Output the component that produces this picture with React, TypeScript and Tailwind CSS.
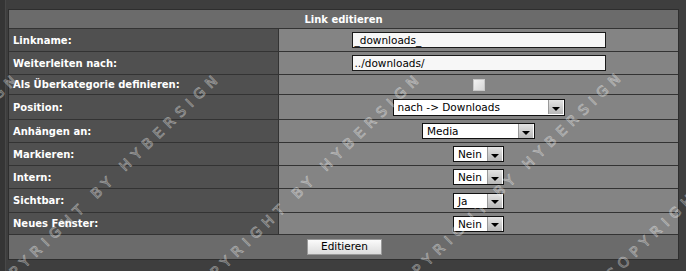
const font = "font-['Verdana','DejaVu_Sans',sans-serif]";

function TextBox({ value }: { value: string }) {
  return (
    <div className="w-[254px] h-[16px] shrink-0 bg-[#f7f7f7] border border-[#1a1a1a] px-[2px] text-[10.5px] leading-[14px] text-black">
      {value}
    </div>
  );
}

function Select({ value, width }: { value: string; width: string }) {
  return (
    <div className={`${width} shrink-0 bg-white border border-[#111] flex items-center text-[10.5px] text-black`}>
      <span className="flex-1 min-w-0 pl-[4px] leading-[14px] whitespace-nowrap overflow-hidden">{value}</span>
      <span className="w-[15px] h-[14px] shrink-0 mr-[1px] bg-gradient-to-b from-[#e4e4e4] to-[#b8b8b8] border-l border-[#999] flex items-center justify-center">
        <span className="block w-0 h-0 border-l-[4px] border-r-[4px] border-t-[4px] border-l-transparent border-r-transparent border-t-black mt-[3px]" />
      </span>
    </div>
  );
}

interface Row {
  label: string;
  h: string;
  field: React.ReactNode;
}

const rows: Row[] = [
  { label: "Linkname:", h: "h-[23px]", field: <TextBox value="_downloads_" /> },
  { label: "Weiterleiten nach:", h: "h-[23px]", field: <TextBox value="../downloads/" /> },
  {
    label: "Als Überkategorie definieren:",
    h: "h-[20px]",
    field: <div className="w-[12px] h-[12px] border border-[#c8c8c8] bg-gradient-to-br from-[#f2f2f2] to-[#d6d6d6]" />,
  },
  { label: "Position:", h: "h-[25px]", field: <Select value="nach -> Downloads" width="w-[172px] h-[17px]" /> },
  { label: "Anhängen an:", h: "h-[23px]", field: <Select value="Media" width="w-[113px] h-[16px]" /> },
  { label: "Markieren:", h: "h-[23px]", field: <Select value="Nein" width="w-[51px] h-[16px]" /> },
  { label: "Intern:", h: "h-[23px]", field: <Select value="Nein" width="w-[51px] h-[16px]" /> },
  { label: "Sichtbar:", h: "h-[24px]", field: <Select value="Ja" width="w-[51px] h-[16px]" /> },
  { label: "Neues Fenster:", h: "h-[22px]", field: <Select value="Nein" width="w-[51px] h-[16px]" /> },
];

const marks = [
  { left: "left-[-97px]", top: "top-[186px]" },
  { left: "left-[104px]", top: "top-[186px]" },
  { left: "left-[305px]", top: "top-[186px]" },
  { left: "left-[507px]", top: "top-[184px]" },
  { left: "left-[724px]", top: "top-[166px]" },
];

export default function App() {
  return (
    <div className={`relative w-[686px] h-[271px] overflow-hidden bg-[#3e3e3e] ${font}`}>
      <div className="absolute left-0 top-0 bottom-0 w-[6px] bg-[#353535] border-r border-[#484848]" />
      <div className="ml-[8px] pt-[9px]">
        <div className="w-[671px] border border-[#2e2e2e]">
          {/* header */}
          <div className="h-[19px] bg-[#6b6b6b] border-b border-[#333] flex items-center justify-center text-[10px] font-bold text-white">
            Link editieren
          </div>

          {rows.map((r) => (
            <div key={r.label} className={`${r.h} flex border-b border-[#333]`}>
              <div className="w-[270px] bg-[#505050] border-r border-[#333] flex items-center pl-[4px] text-[10px] font-bold text-white">
                {r.label}
              </div>
              <div className="flex-1 bg-[#848484] flex items-center justify-center">{r.field}</div>
            </div>
          ))}

          {/* footer */}
          <div className="h-[24px] bg-[#6b6b6b] flex items-center justify-center">
            <div className="w-[75px] h-[16px] ml-[2px] bg-gradient-to-b from-[#fbfbfb] to-[#dcdcdc] border border-[#9a9a9a] flex items-center justify-center text-[10.5px] text-black">
              Editieren
            </div>
          </div>
        </div>
      </div>

      {/* watermark */}
      {marks.map((m, i) => (
        <div key={i} className={`pointer-events-none absolute ${m.left} ${m.top} w-0 h-0`}>
          <div className="absolute -translate-x-1/2 -translate-y-1/2 rotate-[-44deg] whitespace-nowrap text-[14px] tracking-[6px] font-['DejaVu_Sans',sans-serif] text-white/5 [-webkit-text-stroke:0.8px_rgba(255,255,255,0.4)]">
            COPYRIGHT BY HYBERSIGN
          </div>
        </div>
      ))}
    </div>
  );
}
